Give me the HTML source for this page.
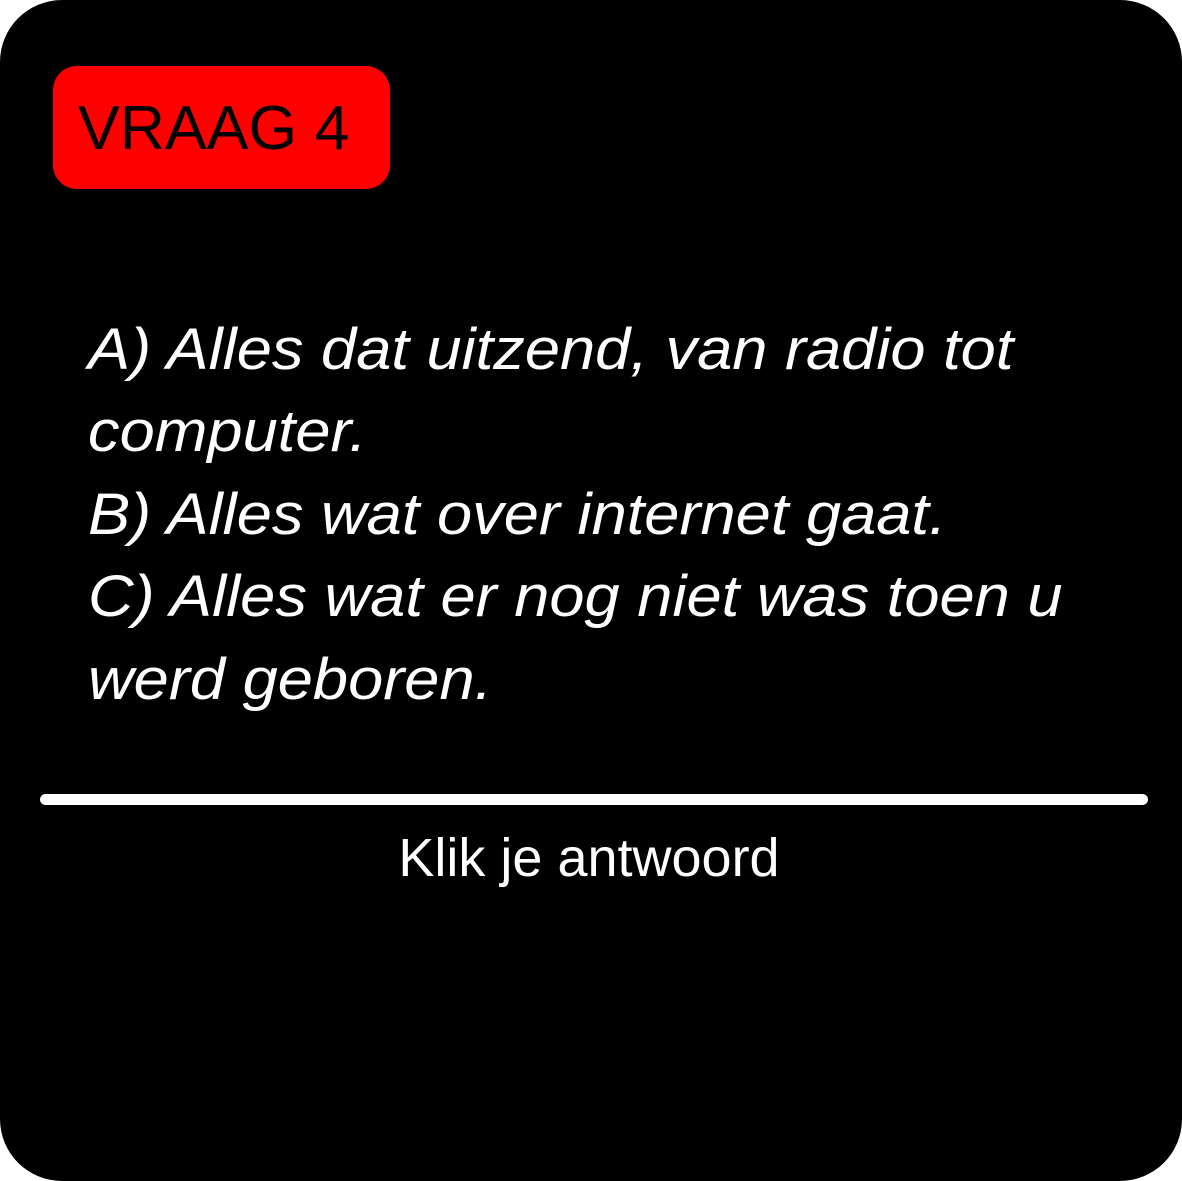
<!DOCTYPE html>
<html><head><style>
html,body{margin:0;padding:0;background:#fff;width:1182px;height:1181px;overflow:hidden}
.card{position:absolute;left:0;top:0;width:1182px;height:1181px;background:#000;border-radius:62px}
.tag{position:absolute;left:53px;top:66px;width:337px;height:123px;background:#f00;border-radius:24px}
.t{position:absolute;font-family:"Liberation Sans",sans-serif;white-space:nowrap;line-height:1;transform-origin:0 0}
.q{color:#fff;font-style:italic;font-size:58px;left:88px;transform:scaleX(1.09)}
.line{position:absolute;left:40px;top:794px;width:1108px;height:11px;background:#fff;border-radius:6px}
</style></head><body>
<div class="card"></div>
<div class="tag"></div>
<div class="t" style="left:78px;top:98px;font-size:62px;color:#000;transform:scaleX(1.01)">VRAAG 4</div>
<div class="t q" style="top:321px">A) Alles dat uitzend, van radio tot</div>
<div class="t q" style="top:403px">computer.</div>
<div class="t q" style="top:486px">B) Alles wat over internet gaat.</div>
<div class="t q" style="top:568px">C) Alles wat er nog niet was toen u</div>
<div class="t q" style="top:651px">werd geboren.</div>
<div class="line"></div>
<div class="t" style="left:0;width:1178px;text-align:center;top:831px;font-size:54px;color:#fff">Klik je antwoord</div>
</body></html>
